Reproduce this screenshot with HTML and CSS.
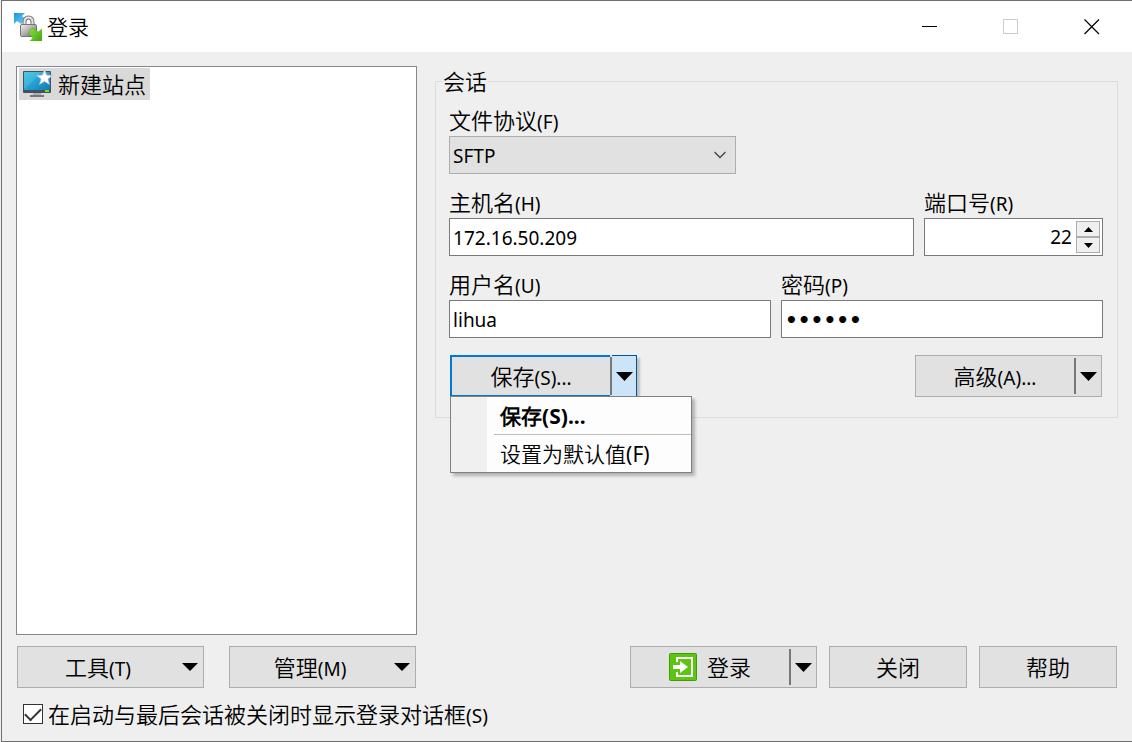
FILE: index.html
```html
<!DOCTYPE html>
<html lang="zh-CN">
<head>
  <meta charset="UTF-8">
  <meta name="viewport" content="width=device-width, initial-scale=1.0">
  <title>登录</title>
  <link rel="stylesheet" href="styles.css">
</head>
<body>

<div class="dialog">
  <header class="titlebar">
    <svg class="app-icon" width="28" height="28" viewBox="0 0 28 28" aria-hidden="true">
      <defs>
        <linearGradient id="lockBody" x1="0" y1="0" x2="1" y2="1">
          <stop offset="0" stop-color="#f4f4f4"/>
          <stop offset="0.5" stop-color="#b0aeae"/>
          <stop offset="1" stop-color="#605e5e"/>
        </linearGradient>
        <linearGradient id="blueArrow" x1="0" y1="0" x2="1" y2="1">
          <stop offset="0" stop-color="#1a93dc"/>
          <stop offset="1" stop-color="#6fd3f7"/>
        </linearGradient>
        <linearGradient id="greenArrow" x1="0" y1="0" x2="1" y2="1">
          <stop offset="0" stop-color="#8be03a"/>
          <stop offset="1" stop-color="#3fa80f"/>
        </linearGradient>
      </defs>
      <path d="M0 0H11L8 3L12 7L7 11L3 8L0 11Z" fill="url(#blueArrow)"/>
      <path d="M10.500 13V9Q10.500 4.500 14.500 4.500Q18.500 4.500 18.500 9V13" fill="none" stroke="#777" stroke-width="4"/>
      <path d="M10.500 13V9Q10.500 4.500 14.500 4.500Q18.500 4.500 18.500 9V13" fill="none" stroke="#e4e4e4" stroke-width="2"/>
      <rect x="6.500" y="11.500" width="16" height="12" rx="1.500" fill="url(#lockBody)" stroke="#757575"/>
      <path d="M16 17L19 15L24 19L28 16V28H16L19 25L15 20.500Z" fill="url(#greenArrow)" stroke="#58ad25" stroke-width="0.500"/>
    </svg>
    <h1 class="title">登录</h1>
    <div class="window-controls">
      <button type="button" class="window-button" aria-label="最小化">
        <svg width="16" height="16" viewBox="0 0 16 16"><path d="M0 7.500H15" stroke="#000"/></svg>
      </button>
      <button type="button" class="window-button" aria-label="最大化" disabled>
        <svg width="16" height="16" viewBox="0 0 16 16"><rect x="0.500" y="0.500" width="14" height="14" fill="none" stroke="#ccc"/></svg>
      </button>
      <button type="button" class="window-button" aria-label="关闭窗口">
        <svg width="16" height="16" viewBox="0 0 16 16"><path d="M0.500 0.500L15 15M15 0.500L0.500 15" stroke="#000" stroke-width="1.200"/></svg>
      </button>
    </div>
  </header>

  <main class="content">
    <ul class="site-list">
      <li>
        <button type="button" class="site selected">
          <svg width="32" height="30" viewBox="0 0 32 30" aria-hidden="true">
            <defs>
              <linearGradient id="screen" x1="0" y1="0" x2="1" y2="1">
                <stop offset="0" stop-color="#30c4dc"/>
                <stop offset="0.500" stop-color="#23a0d4"/>
                <stop offset="1" stop-color="#137ab8"/>
              </linearGradient>
            </defs>
            <rect x="1" y="2" width="28" height="22" rx="1" fill="#45525c"/>
            <rect x="2" y="3" width="26" height="18" fill="url(#screen)"/>
            <path d="M2 3H20L4 19H2Z" fill="#fff" opacity="0.120"/>
            <rect x="23" y="21" width="4" height="2" fill="#7be000"/>
            <rect x="11" y="24" width="8" height="2" fill="#a9afb3"/>
            <rect x="8" y="26" width="14" height="2" fill="#6d7880"/>
            <path d="M22.500 0.500L24.700 6L30.500 6.400L26 10L27.600 15.500L22.500 12.500L17.400 15.500L19 10L14.500 6.400L20.300 6Z" fill="#fff" stroke="#a9b4ba" stroke-width="0.700"/>
          </svg>
          <span>新建站点</span>
        </button>
      </li>
    </ul>

    <form class="session">
      <fieldset>
        <legend>会话</legend>
        <div class="fields">
          <div class="field protocol">
            <label for="protocol">文件协议<span class="key">(F)</span></label>
            <div class="select-box">
              <select id="protocol">
                <option selected>SFTP</option>
              </select>
              <svg class="chevron" width="12" height="8" viewBox="0 0 12 8" aria-hidden="true"><path d="M0.500 1L6 6.500L11.500 1" fill="none" stroke="#444" stroke-width="1.300"/></svg>
            </div>
          </div>

          <div class="row">
            <div class="field host">
              <label for="host">主机名<span class="key">(H)</span></label>
              <input type="text" id="host" class="text-box" value="172.16.50.209">
            </div>
            <div class="field port">
              <label for="port">端口号<span class="key">(R)</span></label>
              <div class="spinner">
                <input type="number" id="port" value="22">
                <div class="spin-buttons">
                  <button type="button" aria-label="增加"><svg width="9" height="5" viewBox="0 0 9 5"><path d="M0 5L4.500 0L9 5Z"/></svg></button>
                  <button type="button" aria-label="减少"><svg width="9" height="5" viewBox="0 0 9 5"><path d="M0 0L4.500 5L9 0Z"/></svg></button>
                </div>
              </div>
            </div>
          </div>

          <div class="row">
            <div class="field user">
              <label for="user">用户名<span class="key">(U)</span></label>
              <input type="text" id="user" class="text-box" value="lihua">
            </div>
            <div class="field user">
              <label for="password">密码<span class="key">(P)</span></label>
              <input type="password" id="password" class="text-box" value="123456">
            </div>
          </div>

          <div class="actions">
            <div class="split open">
              <button type="button" class="split-main"><span>保存<span class="key">(S)...</span></span></button>
              <button type="button" class="split-arrow" aria-label="保存选项" aria-expanded="true"><svg width="17" height="9" viewBox="0 0 17 9"><path d="M0 0H17L8.500 9Z"/></svg></button>
              <div class="menu" role="menu">
                <button type="button" role="menuitem" class="menu-item default">保存(S)...</button>
                <hr>
                <button type="button" role="menuitem" class="menu-item">设置为默认值(F)</button>
              </div>
            </div>
            <div class="split">
              <button type="button" class="split-main"><span>高级<span class="key">(A)...</span></span></button>
              <button type="button" class="split-arrow" aria-label="高级选项"><svg width="17" height="9" viewBox="0 0 17 9"><path d="M0 0H17L8.500 9Z"/></svg></button>
            </div>
          </div>
        </div>
      </fieldset>
    </form>
  </main>

  <footer class="footer">
    <div class="tools">
      <button type="button" class="button menu-button"><span class="menu-label">工具<span class="key">(T)</span></span><svg width="16" height="8" viewBox="0 0 16 8"><path d="M0 0H16L8 8Z"/></svg></button>
      <button type="button" class="button menu-button"><span class="menu-label">管理<span class="key">(M)</span></span><svg width="16" height="8" viewBox="0 0 16 8"><path d="M0 0H16L8 8Z"/></svg></button>
    </div>
    <div class="commands">
      <div class="split">
        <button type="button" class="split-main">
          <svg width="28" height="28" viewBox="0 0 28 28" aria-hidden="true">
            <rect x="0.500" y="0.500" width="27" height="27" rx="1" fill="#5bc510" stroke="#449a08"/>
            <path d="M8 9V5H23V23H8V19" fill="none" stroke="#fff" stroke-width="2"/>
            <path d="M4 12H11V8L19 14L11 20V16H4Z" fill="#fff"/>
          </svg>
          <span>登录</span>
        </button>
        <button type="button" class="split-arrow" aria-label="登录选项"><svg width="17" height="9" viewBox="0 0 17 9"><path d="M0 0H17L8.500 9Z"/></svg></button>
      </div>
      <button type="button" class="button">关闭</button>
      <button type="button" class="button">帮助</button>
    </div>
  </footer>

  <label class="startup">
    <input type="checkbox" checked>
    <span>在启动与最后会话被关闭时显示登录对话框<span class="key">(S)</span></span>
  </label>
</div>

</body>
</html>
```

FILE: styles.css
```css
* {
  box-sizing: border-box;
}

body {
  margin: 0;
  font-family: "Noto Sans", "Noto Sans CJK SC DemiLight", "Noto Sans CJK SC", sans-serif;
  font-size: 22px;
  line-height: 30px;
  color: #000;
  background-color: #efefef;
}

button,
input,
select {
  margin: 0;
  padding: 0;
  font: inherit;
  color: inherit;
  border-radius: 0;
}

svg {
  display: block;
  flex: none;
}

.key {
  font-size: 19px;
  line-height: 1;
}

.dialog {
  display: flex;
  flex-direction: column;
  min-height: 100vh;
  margin-left: 1px;
  border: 1px solid #707070;
  border-right: none;
}

/* title bar */
.titlebar {
  display: flex;
  align-items: center;
  height: 51px;
  padding-left: 12px;
  background-color: #fff;
}

.title {
  flex: 1;
  margin: 0 0 0 5px;
  font-size: 21px;
  font-weight: normal;
}

.window-controls {
  display: flex;
  align-self: stretch;
}

.window-button {
  display: flex;
  align-items: center;
  justify-content: center;
  width: 81px;
  border: none;
  background: none;
}

/* site list and session */
.content {
  flex: 1;
  display: grid;
  grid-template-columns: 37fr 63fr;
  gap: 18px;
  padding: 14px 14px 0;
}

.site-list {
  margin: 0;
  padding: 1px 2px;
  list-style: none;
  background-color: #fff;
  border: 1px solid #828790;
}

.site {
  display: flex;
  align-items: center;
  gap: 4px;
  height: 32px;
  padding: 0 4px 0 3px;
  border: none;
  background: none;
}

.site.selected {
  background-color: #d9d9d9;
}

fieldset {
  min-width: 0;
  margin: 0;
  padding: 0;
  border: 1px solid #dcdcdc;
}

legend {
  margin-left: 6px;
  padding: 0 1px;
}

.fields {
  display: flex;
  flex-direction: column;
  gap: 14px;
  padding: 10px 14px 20px 13px;
}

.field {
  display: flex;
  flex-direction: column;
  min-width: 0;
}

.field label {
  padding-bottom: 2px;
  line-height: 28px;
}

.row {
  display: flex;
  gap: 10px;
}

.protocol {
  width: 287px;
}

.host,
.user {
  flex: 1;
}

.port {
  width: 179px;
}

.text-box,
.spinner,
select {
  width: 100%;
  height: 38px;
  border: 1px solid #7a7a7a;
  background-color: #fff;
}

.text-box,
select {
  padding: 1px 3px 0;
  font-size: 19px;
}

.text-box[type="password"] {
  font-family: "DejaVu Sans", sans-serif;
  font-size: 20px;
  font-weight: bold;
}

.select-box {
  display: grid;
  align-items: center;
}

.select-box select,
.chevron {
  grid-area: 1 / 1;
}

select {
  appearance: none;
  background-color: #e1e1e1;
  border-color: #adadad;
}

.chevron {
  justify-self: end;
  margin-right: 10px;
  pointer-events: none;
}

.spinner {
  display: flex;
  align-items: center;
  padding: 2px;
}

.spinner input {
  flex: 1;
  min-width: 0;
  padding-right: 4px;
  border: none;
  background: none;
  font-size: 19px;
  text-align: right;
}

.spinner input::-webkit-inner-spin-button {
  appearance: none;
  margin: 0;
}

.spin-buttons {
  display: flex;
  flex-direction: column;
  align-self: stretch;
  width: 24px;
}

.spin-buttons button {
  flex: 1;
  display: flex;
  align-items: center;
  justify-content: center;
  border: 1px solid #adadad;
  background-color: #efefef;
}

.actions {
  display: flex;
  justify-content: space-between;
  padding: 3px 1px 0;
}

/* buttons */
.button,
.split {
  height: 42px;
  border: 1px solid #adadad;
  background-color: #e1e1e1;
}

.split {
  position: relative;
  display: flex;
  width: 187px;
}

.split-main,
.split-arrow {
  display: flex;
  align-items: center;
  justify-content: center;
  border: none;
  background: none;
}

.split-main {
  flex: 1;
  gap: 10px;
}

.split-arrow {
  width: 25px;
}

.split::before {
  content: "";
  order: 1;
  width: 2px;
  margin: 2px 0;
  background-color: #777;
}

.split-arrow {
  order: 2;
}

.split.open {
  border: none;
  background: linear-gradient(to right, #e1e1e1 160px, #cce4f7 160px);
}

.open .split-main {
  border: 2px solid #0078d7;
  border-right: none;
}

.open .split-arrow {
  border: 1px solid #005499;
  border-left: none;
  box-shadow: 3px 3px 2px rgba(0, 0, 0, 0.2);
}

.menu {
  position: absolute;
  top: 41px;
  left: 0;
  z-index: 1;
  width: 242px;
  border: 1px solid #808080;
  background: linear-gradient(to right, #f0f0f0 36px, #fdfdfd 36px);
  box-shadow: 3px 3px 3px rgba(0, 0, 0, 0.25);
}

.menu-item {
  display: block;
  width: 100%;
  height: 37px;
  padding-left: 49px;
  border: none;
  background: none;
  font-size: 21px;
  text-align: left;
}

.menu-item.default {
  font-weight: bold;
}

.menu hr {
  height: 1px;
  margin: 0 0 0 43px;
  border: none;
  background-color: #bdbdbd;
}

/* bottom bar */
.footer {
  display: grid;
  grid-template-columns: 37fr 63fr;
  gap: 18px;
  padding: 11px 14px 0;
}

.tools {
  display: flex;
  justify-content: space-between;
  padding: 0 1px;
}

.menu-button {
  display: flex;
  align-items: center;
  width: 187px;
  padding-right: 5px;
}

.menu-label {
  flex: 1;
  padding-right: 4px;
}

.commands {
  display: flex;
  justify-content: flex-end;
  gap: 12px;
  padding-right: 1px;
}

.commands .button {
  width: 138px;
}

.startup {
  display: flex;
  align-items: center;
  align-self: flex-start;
  gap: 5px;
  margin: 11px 21px 12px;
}

.startup input {
  appearance: none;
  display: grid;
  place-items: center;
  width: 20px;
  height: 20px;
  border: 1px solid #333;
  background-color: #fff;
}

.startup input:checked::before {
  content: "";
  width: 14px;
  height: 7px;
  border: solid #333;
  border-width: 0 0 2px 2px;
  transform: translateY(-2px) rotate(-45deg);
}
```
